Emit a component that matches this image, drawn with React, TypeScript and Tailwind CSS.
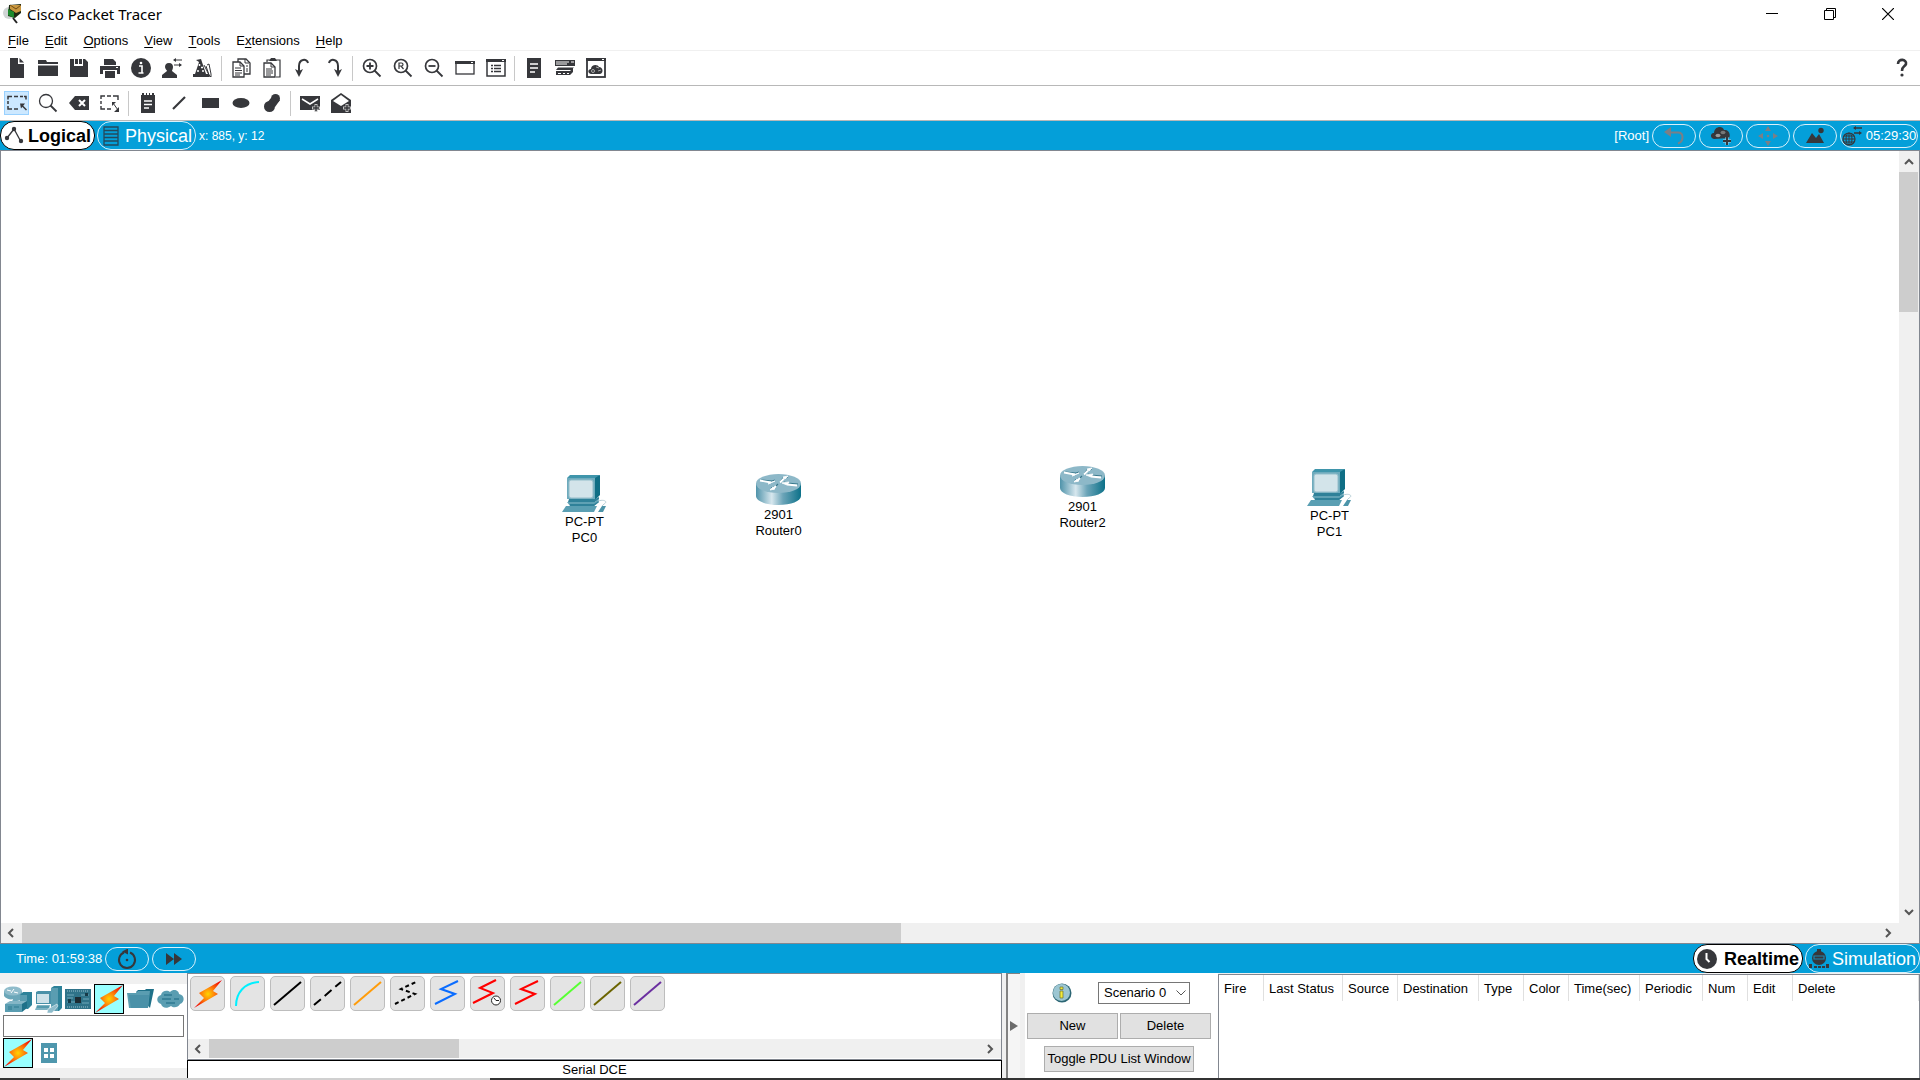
import type { ReactNode } from "react";
import clsx from "clsx";

const INK = "#36373b";

type IconProps = { children: ReactNode; size?: number };

// 20x20 drawing grid shared by the toolbar icons
const Icon = ({ children, size = 20 }: IconProps) => (
  <svg width={size} height={size} viewBox="0 0 20 20" fill="none" aria-hidden="true" className="shrink-0">
    {children}
  </svg>
);

const NewIcon = () => (
  <Icon>
    <path d="M3 0h8v6h6v14H3z" fill={INK} />
    <path d="M12.500 0L17 4.500H12.500z" fill={INK} />
  </Icon>
);

const OpenIcon = () => (
  <Icon>
    <path d="M0 2h8l1 2h11v2H0zM0 7.500h20V18H0z" fill={INK} />
  </Icon>
);

const SaveIcon = () => (
  <Icon>
    <path d="M1 1h4v7h9V1h2l3 3v15H1z" fill={INK} />
    <path d="M10 1h3v5h-3zM6 1h3v5H6z" fill={INK} />
  </Icon>
);

const PrintIcon = () => (
  <Icon>
    <path d="M4 1h9l3 3v3H4zM0 8h20v8h-3v-4H3v4H0zM5 13h10v7H5z" fill={INK} />
    <path d="M16 9.500h2" stroke="#fff" />
  </Icon>
);

const InfoIcon = () => (
  <Icon>
    <circle cx="10" cy="10" r="10" fill={INK} />
    <path d="M8 8h3v7M7.500 15h5" stroke="#fff" strokeWidth="1.600" />
    <circle cx="10" cy="5" r="1.300" fill="#fff" />
  </Icon>
);

const UserIcon = () => (
  <Icon>
    <path d="M7 5c3 0 4 2 4 4s-1 3-1 4l5 4v3H0v-3l5-4c0-1-2-2-2-4s1-4 4-4z" fill={INK} />
    <path d="M12 2h8M12 7h7" stroke={INK} strokeWidth="1.200" />
    <path d="M14 0v4l-3-2zM17 5v4l3-2z" fill={INK} />
  </Icon>
);

const WizardIcon = () => (
  <Icon>
    <path d="M3 2l5-1 5 15h3v3H0v-3h2l4-12z" fill={INK} />
    <path d="M6.500 6v2M8 9.500h2M5 12v2M9 13h2" stroke="#fff" strokeWidth="1.500" />
    <path d="M11 7l6 12M16 6l2 10v3l-2-2-3-9M16 6l-2 1" stroke={INK} />
  </Icon>
);

const CopyIcon = () => (
  <Icon>
    <path d="M7 5V1h8l4 4v11h-6" stroke={INK} strokeWidth="1.300" />
    <path d="M2 4h7l4 4v11H2z" fill="#fff" stroke={INK} strokeWidth="1.300" />
    <path d="M9 4v4h4M4 10h6M4 12.500h7M4 15h7M4 17h5M14 1v4h4M15 8h2M15 11h2M15 13h2" stroke={INK} />
  </Icon>
);

const PasteIcon = () => (
  <Icon>
    <path d="M5 4V2h13v17h-4" stroke={INK} strokeWidth="1.200" />
    <path d="M7 3l2-3h4l2 3z" fill={INK} />
    <path d="M2 5h7l4 4v10H2z" fill="#fff" stroke={INK} strokeWidth="1.300" />
    <path d="M9 5v4h4M4 11h6M4 13h7M4 15h7M4 17h5" stroke={INK} />
  </Icon>
);

const UndoIcon = () => (
  <Icon>
    <path d="M15 5c-1-5-9-4-9 3v5" stroke={INK} strokeWidth="2" />
    <path d="M2 11l4 2 4-2-4 8z" fill={INK} />
  </Icon>
);

const RedoIcon = () => (
  <Icon>
    <path d="M5 5c1-5 9-4 9 3v5" stroke={INK} strokeWidth="2" />
    <path d="M10 11l4 2 4-2-4 8z" fill={INK} />
  </Icon>
);

const ZoomGlyph = ({ kind }: { kind: "in" | "reset" | "out" | "plain" }) => (
  <Icon>
    <circle cx="8" cy="8" r="6.500" stroke={INK} strokeWidth={kind === "plain" ? 1.3 : 1.7} />
    <path d="M12.500 12.500l6 6" stroke={INK} strokeWidth="1.800" />
    {kind === "in" && <path d="M4.500 8h7M8 4.500v7" stroke={INK} strokeWidth="1.800" />}
    {kind === "out" && <path d="M4.500 8h7" stroke={INK} strokeWidth="1.800" />}
    {kind === "reset" && <path d="M6 11v-6h2.500c2 0 2 3 0 3H6M8 8l2.500 3" stroke={INK} strokeWidth="1.200" />}
  </Icon>
);

const WindowIcon = () => (
  <Icon>
    <rect x="1" y="4" width="18" height="12" stroke={INK} strokeWidth="1.300" />
    <path d="M0 3h20v3H0z" fill={INK} />
    <path d="M16 4.500h2" stroke="#fff" />
  </Icon>
);

const ListWindowIcon = () => (
  <Icon>
    <rect x="1" y="2" width="18" height="16" stroke={INK} strokeWidth="1.500" />
    <path d="M0 1h20v3H0z" fill={INK} />
    <path d="M16 2.500h2" stroke="#fff" />
    <path d="M5 7.500h2M8 7.500h7M5 10.500h2M8 10.500h7M5 13.500h2M8 13.500h7" stroke={INK} strokeWidth="1.300" />
  </Icon>
);

const DocIcon = () => (
  <Icon>
    <path d="M3 0h14v20H3z" fill={INK} />
    <path d="M6 6h8M6 10h8M6 14h5" stroke="#fff" strokeWidth="1.500" />
  </Icon>
);

const StackIcon = () => (
  <Icon>
    <path d="M0 2h20v6H0z" fill={INK} />
    <path d="M1 4h13M1 6h11M16 4h3" stroke="#fff" />
    <path d="M3 9.500h16l-3 2.500H1zM1 13h14l3-3v4l-3 3H1z" fill={INK} />
    <path d="M3 15.500h3M8 15.500h2M12 15.500h2" stroke="#fff" />
  </Icon>
);

const CloudWindowIcon = () => (
  <Icon>
    <rect x="1" y="1" width="18" height="18" stroke={INK} strokeWidth="1.800" />
    <path d="M0 0h20v3H0z" fill={INK} />
    <path d="M16 1.500h2" stroke="#fff" />
    <path d="M5 16c-4-1-3-5 0-5 0-5 7-5 8-2 4 0 5 6 1 7z" fill={INK} />
    <circle cx="7" cy="13" r="1.500" stroke="#aaa" />
    <path d="M10 9l3 1M12 13l3-1" stroke="#aaa" />
  </Icon>
);

const SelectIcon = () => (
  <Icon>
    <path d="M1 6.500V3.500h4M7 3.500h4M13 3.500h3M17 3.500h2v3M1 8v3M1 13v3h4M7 16h4" stroke={INK} strokeWidth="1.500" />
    <path d="M19.500 17l-5-5" stroke={INK} strokeWidth="1.500" />
    <path d="M13 10.500h5l-4 5z" fill={INK} />
  </Icon>
);

const EraseIcon = () => (
  <Icon>
    <path d="M0 10l6-7h14v14H6z" fill={INK} />
    <path d="M10 7l6 6M16 7l-6 6" stroke="#fff" strokeWidth="2" />
  </Icon>
);

const ResizeIcon = () => (
  <Icon>
    <path d="M1 6V3h4M7 3h4M13 3h5v4M1 8v3M1 13v3h4M7 16h4" stroke={INK} strokeWidth="1.400" />
    <path d="M13 10l5 7" stroke={INK} />
    <path d="M12 13V9h4zM19 14v5h-5z" fill={INK} />
  </Icon>
);

const NoteIcon = () => (
  <Icon>
    <path d="M3 2h14v18H3zM4 0h2v4H4zM8 0h1v4H8zM11 0h1v4h-1zM14 0h2v4h-2z" fill={INK} />
    <path d="M6 8h8M6 11.500h8M6 15h5" stroke="#fff" strokeWidth="1.500" />
  </Icon>
);

const LineIcon = () => (
  <Icon>
    <path d="M4 16L16 4" stroke={INK} strokeWidth="2.200" />
  </Icon>
);

const RectIcon = () => (
  <Icon>
    <path d="M2 5h17v10H2z" fill={INK} />
  </Icon>
);

const EllipseIcon = () => (
  <Icon>
    <ellipse cx="10" cy="10" rx="8.500" ry="5" fill={INK} />
  </Icon>
);

const FreeformIcon = () => (
  <Icon>
    <circle cx="13.500" cy="5.500" r="4.500" fill={INK} />
    <circle cx="7.500" cy="13.500" r="5.500" fill={INK} />
    <path d="M9 5l9 2-5 7-8-4z" fill={INK} />
  </Icon>
);

const MailPlusIcon = () => (
  <Icon>
    <path d="M0 3h20v14H0z" fill={INK} />
    <path d="M2 6l8 5 8-5" stroke="#fff" strokeWidth="1.500" />
    <path d="M16 11v8M12 15h8" stroke="#c4c4c4" strokeWidth="3" />
    <path d="M16 12v6M13 15h6" stroke={INK} strokeWidth="1.500" />
  </Icon>
);

const MailOpenIcon = () => (
  <Icon>
    <path d="M0 7l10-7 10 7v13H0z" fill={INK} />
    <path d="M2 8l8-6 8 6-8 5z" fill="#fff" />
    <path d="M16 11v8M12 15h8" stroke="#c4c4c4" strokeWidth="3" />
    <path d="M16 12v6M13 15h6" stroke={INK} strokeWidth="1.500" />
  </Icon>
);

type Tool = { name: string; icon: ReactNode; active?: boolean };

const mainTools: Tool[][] = [
  [
    { name: "New", icon: <NewIcon /> },
    { name: "Open", icon: <OpenIcon /> },
    { name: "Save", icon: <SaveIcon /> },
    { name: "Print", icon: <PrintIcon /> },
    { name: "Network Information", icon: <InfoIcon /> },
    { name: "User Profile", icon: <UserIcon /> },
    { name: "Activity Wizard", icon: <WizardIcon /> },
  ],
  [
    { name: "Copy", icon: <CopyIcon /> },
    { name: "Paste", icon: <PasteIcon /> },
    { name: "Undo", icon: <UndoIcon /> },
    { name: "Redo", icon: <RedoIcon /> },
  ],
  [
    { name: "Zoom In", icon: <ZoomGlyph kind="in" /> },
    { name: "Zoom Reset", icon: <ZoomGlyph kind="reset" /> },
    { name: "Zoom Out", icon: <ZoomGlyph kind="out" /> },
    { name: "Drawing Palette", icon: <WindowIcon /> },
    { name: "Command Log", icon: <ListWindowIcon /> },
  ],
  [
    { name: "Custom Devices", icon: <DocIcon /> },
    { name: "View Devices", icon: <StackIcon /> },
    { name: "Cluster View", icon: <CloudWindowIcon /> },
  ],
];

const editTools: Tool[][] = [
  [
    { name: "Select", icon: <SelectIcon />, active: true },
    { name: "Inspect", icon: <ZoomGlyph kind="plain" /> },
    { name: "Delete Object", icon: <EraseIcon /> },
    { name: "Resize", icon: <ResizeIcon /> },
  ],
  [
    { name: "Place Note", icon: <NoteIcon /> },
    { name: "Draw Line", icon: <LineIcon /> },
    { name: "Draw Rectangle", icon: <RectIcon /> },
    { name: "Draw Ellipse", icon: <EllipseIcon /> },
    { name: "Draw Freeform", icon: <FreeformIcon /> },
  ],
  [
    { name: "Add Simple PDU", icon: <MailPlusIcon /> },
    { name: "Add Complex PDU", icon: <MailOpenIcon /> },
  ],
];

const ToolGroups = ({ groups }: { groups: Tool[][] }) => (
  <div className="flex items-center pl-px">
    {groups.map((group, i) => (
      <div key={i} className="flex items-center">
        {i > 0 && <div className="mx-[3px] h-[25px] w-px bg-[#c8c8c8]" />}
        {group.map((tool) => (
          <div key={tool.name} className="flex w-[31px] justify-center">
            <button
              aria-label={tool.name}
              className={clsx(
                "flex h-6 w-[25px] items-center justify-center border",
                tool.active ? "border-[#99d1ff] bg-[#cce8ff]" : "border-transparent"
              )}
            >
              {tool.icon}
            </button>
          </div>
        ))}
      </div>
    ))}
  </div>
);

const TitleBar = () => (
  <header className="flex h-7 items-center justify-between px-[3px]">
    <div className="flex items-center gap-[5px]">
      <svg width="19" height="20" viewBox="0 0 19 20" aria-hidden="true">
        <circle cx="6" cy="9" r="6" fill="#cfd4d4" />
        <path d="M6 1l12-1v9l-6 5-7-2z" fill="#1d2a12" />
        <path d="M7 1h11v6l-5 2-6-4z" fill="#c9973f" />
        <path d="M7 1l6 4 5-4" stroke="#6d4a14" fill="none" />
        <path d="M5 5l6 3v6l-6-3z" fill="#1c8a2c" />
        <path d="M10 14l4 5" stroke="#222" strokeWidth="2" />
      </svg>
      <h1 className="font-['Noto_Sans',sans-serif] text-[15px] leading-5">Cisco Packet Tracer</h1>
    </div>
    <div className="flex">
      <button aria-label="Minimize" className="flex h-7 w-[58px] items-center justify-center">
        <svg width="12" height="12"><path d="M0 5.500h12" stroke="#000" /></svg>
      </button>
      <button aria-label="Restore" className="flex h-7 w-[58px] items-center justify-center">
        <svg width="12" height="12" fill="none" stroke="#000">
          <path d="M.5 2.500h9v9h-9zM2.500 2.500v-2h9v9h-2" />
        </svg>
      </button>
      <button aria-label="Close" className="flex h-7 w-[58px] items-center justify-center">
        <svg width="12" height="12"><path d="M0 0l12 12M12 0L0 12" stroke="#000" strokeWidth="1.200" /></svg>
      </button>
    </div>
  </header>
);

// [before, access key, after]
const menus = [
  ["", "F", "ile"],
  ["", "E", "dit"],
  ["", "O", "ptions"],
  ["", "V", "iew"],
  ["", "T", "ools"],
  ["E", "x", "tensions"],
  ["", "H", "elp"],
];

const MenuBar = () => (
  <nav className="flex h-[23px] gap-4 border-b border-[#f0f0f0] pl-2 pt-1">
    {menus.map(([before, key, after]) => (
      <button key={key + after} className="flex h-[18px] items-center leading-[18px]">
        {before}
        <span className="underline underline-offset-2">{key}</span>
        {after}
      </button>
    ))}
  </nav>
);

const Pill = ({ label, children, wide }: { label: string; children: ReactNode; wide?: boolean }) => (
  <button
    aria-label={label}
    className={clsx(
      "flex h-6 items-center justify-center rounded-full border border-[#d9f1fb]",
      wide ? "w-[78px] gap-1 text-white" : "w-11"
    )}
  >
    {children}
  </button>
);

const ModeTab = ({ active, icon, children, className }: { active?: boolean; icon: ReactNode; children: ReactNode; className: string }) => (
  <button
    className={clsx(
      "flex h-[29px] items-center justify-between rounded-[14px] border pl-[3px] pr-[3px] text-[18px] leading-6",
      active ? "border-black bg-white font-bold text-black" : "border-[#d9f1fb] text-white",
      className
    )}
  >
    {icon}
    {children}
  </button>
);

const WorkspaceBar = () => (
  <div className="flex h-[29px] items-center justify-between bg-[#049fd9] text-white">
    <div className="flex items-center gap-[2px]">
      <ModeTab
        active
        className="w-[95px]"
        icon={
          <Icon>
            <path d="M3 12L10 3l6 11" stroke={INK} strokeWidth="1.300" />
            <circle cx="3" cy="12" r="2.200" fill={INK} />
            <circle cx="10" cy="3" r="2.200" fill={INK} />
            <circle cx="17" cy="15" r="2.200" fill={INK} />
          </Icon>
        }
      >
        Logical
      </ModeTab>
      <ModeTab
        className="w-[99px]"
        icon={
          <Icon>
            <path d="M3 1h14v18H3zM3 4.500h14M3 8h14M3 11.500h14M3 15h14" stroke="#24495c" strokeWidth="1.300" />
          </Icon>
        }
      >
        Physical
      </ModeTab>
      <span className="pl-px text-[12px] leading-4">x: 885, y: 12</span>
    </div>
    <div className="flex items-center gap-[3px] pr-[2px]">
      <span className="leading-4">[Root]</span>
      <Pill label="Back">
        <Icon>
          <path d="M6 6.500h8c6 0 6 9 0 11" stroke="#7b7f86" strokeWidth="2" />
          <path d="M0 6l7-5v10z" fill="#7b7f86" />
        </Icon>
      </Pill>
      <Pill label="New Cluster">
        <Icon>
          <path d="M3 13c-5-1-3-7 0-6 0-7 9-8 10-3 5-1 7 5 5 8z" fill={INK} />
          <ellipse cx="7" cy="9.500" rx="2.500" ry="1.700" fill="#9a9a9a" />
          <ellipse cx="12" cy="6.500" rx="2.500" ry="1.700" fill="#777" />
          <path d="M16 11v8M12 15h8" stroke="#a9cfe0" strokeWidth="3" />
          <path d="M16 11v8M12 15h8" stroke={INK} strokeWidth="2" />
        </Icon>
      </Pill>
      <Pill label="Move Object">
        <Icon>
          <path d="M10 0l3 5H7zM10 20l3-5H7zM0 10l5-3v6zM20 10l-5-3v6z" fill="#7b7f86" />
          <circle cx="10" cy="10" r="1.300" fill="#7b7f86" />
        </Icon>
      </Pill>
      <Pill label="Set Background">
        <Icon>
          <path d="M1 17l6-10 4 5 3-4 5 9z" fill={INK} />
          <circle cx="16" cy="4.500" r="2.700" fill={INK} />
        </Icon>
      </Pill>
      <Pill label="Environment" wide>
        <Icon>
          <circle cx="7" cy="13" r="6" stroke={INK} strokeWidth="1.200" />
          <ellipse cx="7" cy="13" rx="3" ry="6" stroke={INK} />
          <path d="M7 7v12M1 13h12M2 10h10M2 16h10" stroke={INK} />
          <path d="M12 2h8M12 7h6" stroke={INK} strokeWidth="1.300" />
          <path d="M14 0v4l-3-2zM17 5v4l3-2z" fill={INK} />
        </Icon>
        05:29:30
      </Pill>
    </div>
  </div>
);

const Chevron = ({ dir }: { dir: "up" | "down" | "left" | "right" }) => (
  <svg width="12" height="12" viewBox="0 0 12 12" fill="none" stroke="#555" strokeWidth="2" aria-hidden="true">
    {dir === "up" && <path d="M2 8l4-4 4 4" />}
    {dir === "down" && <path d="M2 4l4 4 4-4" />}
    {dir === "left" && <path d="M8 2L4 6l4 4" />}
    {dir === "right" && <path d="M4 2l4 4-4 4" />}
  </svg>
);

const HScroll = ({ thumb, className }: { thumb: string; className?: string }) => (
  <div className={clsx("flex bg-[#f0f0f0]", className)}>
    <button aria-label="Scroll left" className="flex w-[21px] items-center justify-center pr-[2px]">
      <Chevron dir="left" />
    </button>
    <div className="flex flex-1">
      <div className={clsx("bg-[#cdcdcd]", thumb)} />
    </div>
    <button aria-label="Scroll right" className="flex w-[21px] items-center justify-center pr-[2px]">
      <Chevron dir="right" />
    </button>
  </div>
);

const PcDrawing = () => (
  <svg width="45" height="37" viewBox="0 0 45 37" aria-hidden="true">
    <path d="M5 3l3-3h30l-3 3z" fill="#3f95ab" />
    <path d="M33 3l5-3v20l-5 5z" fill="#0f6e85" />
    <path d="M5 3h28v21H5z" fill="#6eabbd" />
    <rect x="7" y="5" width="24" height="18" rx="2" fill="#d3e4ea" stroke="#94bdca" />
    <path d="M7 24h26l4-2v2l-4 3H6z" fill="#2f8199" />
    <path d="M5 27h28l4-3v3l-5 4H8z" fill="#5fa1b4" />
    <path d="M8 29h24l5-3v1l-5 4H8z" fill="#2f8199" />
    <path d="M4 31h31l-3 6H0z" fill="#5a9fb3" />
    <path d="M36 26c7-2 10 1 6 3l-2 2" stroke="#b7cfd7" fill="none" />
    <path d="M40 31h4l-3 6h-5z" fill="#4c94a9" />
  </svg>
);

const RouterDrawing = () => (
  <svg width="45" height="31" viewBox="0 0 45 31" aria-hidden="true">
    <defs>
      <linearGradient id="routerSide">
        <stop offset="0" stopColor="#4f93aa" />
        <stop offset="0.350" stopColor="#d7e7ee" />
        <stop offset="0.600" stopColor="#6ba4b8" />
        <stop offset="1" stopColor="#0c7189" />
      </linearGradient>
    </defs>
    <path d="M0 9v13c0 5 10 9 22.500 9S45 27 45 22V9z" fill="url(#routerSide)" />
    <ellipse cx="22.500" cy="9.500" rx="22.500" ry="9.500" fill="#8db8c8" />
    <g fill="none" stroke="#39798d" strokeWidth="1.200">
      <path d="M5 6l11 1 3-1M24 8l3-4 5-1M42 10l-11-1-3-1M15 14l4-1 3-3" />
    </g>
    <g fill="none" stroke="#fff" strokeWidth="1.800">
      <path d="M4 6.500l11 2M41 11.500l-10-1M24 8.500l4-4M20 12l-3 3" />
    </g>
    <path d="M19 7l-7 3 3-1.500zM26 9l7-1-2 3zM32 2l-5 1 2 2zM14 16l5-1-2-2z" fill="#fff" stroke="#fff" strokeWidth=".8" />
  </svg>
);

type DeviceProps = { kind: "pc" | "router"; model: string; name: string; spot: string };

const devices: DeviceProps[] = [
  { kind: "pc", model: "PC-PT", name: "PC0", spot: "left-[561px] top-[324px]" },
  { kind: "router", model: "2901", name: "Router0", spot: "left-[755px] top-[323px]" },
  { kind: "router", model: "2901", name: "Router2", spot: "left-[1059px] top-[315px]" },
  { kind: "pc", model: "PC-PT", name: "PC1", spot: "left-[1306px] top-[318px]" },
];

const Device = ({ kind, model, name, spot }: DeviceProps) => (
  <div className={clsx("absolute flex w-[45px] flex-col items-center leading-4", spot)}>
    {kind === "pc" ? <PcDrawing /> : <RouterDrawing />}
    <span className="pt-[2px]">{model}</span>
    <span>{name}</span>
  </div>
);

const Workspace = () => (
  <main className="flex flex-1 flex-col border border-[#828790]">
    <div className="flex flex-1">
      <div className="relative flex-1 overflow-hidden bg-white">
        {devices.map((device) => (
          <Device key={device.name} {...device} />
        ))}
      </div>
      <div className="flex w-5 flex-col bg-[#f0f0f0] pr-px">
        <button aria-label="Scroll up" className="flex h-[21px] items-center justify-center">
          <Chevron dir="up" />
        </button>
        <div className="flex flex-1 flex-col">
          <div className="h-[140px] bg-[#cdcdcd]" />
        </div>
        <button aria-label="Scroll down" className="flex h-[21px] items-center justify-center pb-[2px]">
          <Chevron dir="down" />
        </button>
      </div>
    </div>
    <HScroll className="h-5 pr-5" thumb="w-[879px]" />
  </main>
);

const TimeBar = () => (
  <div className="flex h-[29px] items-center justify-between bg-[#049fd9] text-white">
    <div className="flex items-center gap-[3px] pl-4">
      <span className="leading-4">Time: 01:59:38</span>
      <Pill label="Power Cycle Devices">
        <Icon>
          <path d="M7 3.500a8 8 0 1 0 6 0" stroke={INK} strokeWidth="2" />
          <path d="M5 2.500l6-3v6z" fill={INK} />
          <circle cx="10" cy="11" r="1.300" fill={INK} />
        </Icon>
      </Pill>
      <Pill label="Fast Forward Time">
        <Icon>
          <path d="M2 4l8 6-8 6zM10 4l8 6-8 6z" fill={INK} />
        </Icon>
      </Pill>
    </div>
    <div className="flex items-center gap-[2px]">
      <ModeTab
        active
        className="w-[110px]"
        icon={
          <Icon>
            <circle cx="10" cy="10" r="10" fill={INK} />
            <path d="M9.500 4v6l3 3" stroke="#fff" strokeWidth="2" />
          </Icon>
        }
      >
        Realtime
      </ModeTab>
      <ModeTab
        className="w-[115px]"
        icon={
          <Icon>
            <path d="M8 0h4v3H8z" fill={INK} />
            <circle cx="10" cy="9" r="7" fill={INK} />
            <path d="M5 7h10v3H5z" stroke="#1c87b3" strokeWidth="1.200" />
            <path d="M0 15h3v4H0zM5 17h3v2H5zM9 17h3v2H9zM13 17h3v2h-3zM17 15h3v4h-3z" fill={INK} />
          </Icon>
        }
      >
        Simulation
      </ModeTab>
    </div>
  </div>
);

const Bolt = () => (
  <svg width="28" height="28" viewBox="1 1 28 28" aria-hidden="true">
    <defs>
      <radialGradient id="boltFill" cx="0.500" cy="0.500" r="0.600">
        <stop offset="0" stopColor="#ffd400" />
        <stop offset="0.350" stopColor="#ff8a0a" />
        <stop offset="1" stopColor="#f00000" />
      </radialGradient>
    </defs>
    <path d="M29 1L20 12l5 3L1 29l10-10-5-5z" fill="url(#boltFill)" />
  </svg>
);

const NetworkDevices = () => (
  <svg width="28" height="27" viewBox="0 0 28 27" aria-hidden="true">
    <path d="M0 5v5c2 3 7 4 9 3l-1 3 10-2V5z" fill="#6ba7b9" />
    <ellipse cx="9" cy="5" rx="9" ry="4.500" fill="#8fbccb" />
    <path d="M3 4l4 1M10 6l4 1M7 7l3-4" stroke="#fff" />
    <path d="M16 9l3-3h9v13l-4 4h-8z" fill="#2d8299" />
    <path d="M16 9h7v14h-7z" fill="#5a9db1" />
    <path d="M1 18l5-3h17l-5 3z" fill="#84b6c6" />
    <path d="M1 18h17v8H1z" fill="#5a9db1" />
    <path d="M18 18l5-3v7l-5 4z" fill="#1f7189" />
    <path d="M4 21h4M10 21h5M4 23h4" stroke="#2d7a90" />
  </svg>
);

const EndDevices = () => (
  <svg width="27" height="27" viewBox="0 0 27 27" aria-hidden="true">
    <path d="M16 2l3-2h8v22l-3 3h-8z" fill="#2d8299" />
    <path d="M16 2h7v23h-7z" fill="#5a9db1" />
    <path d="M1 6l2-1h13v13H1z" fill="#4a91a8" />
    <path d="M2 8h12v9H2z" fill="#cfe2e9" />
    <path d="M2 19h13l-1 5H0z" fill="#7fb3c2" />
    <path d="M2 21h12" stroke="#2d8299" />
    <path d="M13 23l9-5 1 2-6 7h-5z" fill="#8fbccb" stroke="#fff" strokeWidth=".5" />
  </svg>
);

const Components = () => (
  <svg width="26" height="20" viewBox="0 0 26 20" aria-hidden="true">
    <path d="M0 0h26v20H0z" fill="#2f7389" />
    <path d="M2 2h21M2 18h21" stroke="#9cc3cf" strokeDasharray="1 1" />
    <path d="M2 6h7M2 9h6M2 13h8M16 6h8M18 10h6M17 14h7" stroke="#6fa9ba" />
    <path d="M10 8h6v6h-6z" fill="#1d2c33" />
    <path d="M3 10h3v4H3zM20 4h3v3h-3z" fill="#173a48" />
  </svg>
);

const Miscellaneous = () => (
  <svg width="27" height="20" viewBox="0 0 27 20" aria-hidden="true">
    <path d="M9 3l2-2h7l1-1h8l-4 19z" fill="#1f7189" />
    <path d="M0 4h9l2-2h12l-2 17H2z" fill="#5a9db1" />
    <path d="M2 6h20l-1 13H4z" fill="#4a91a8" />
  </svg>
);

const Multiuser = () => (
  <svg width="27" height="20" viewBox="0 0 27 20" aria-hidden="true">
    <path d="M4 15c-5-1-5-8 0-9 1-5 7-5 9-3 4-4 9-1 9 2 6 1 6 8 1 10-2 4-7 4-9 2-4 3-9 2-10-2z" fill="#5a9db1" />
    <path d="M7 6h8M5 10h9M17 10h5M9 14h9" stroke="#2f7a91" strokeWidth="1.300" />
  </svg>
);

const categories = [
  { name: "Network Devices", icon: <NetworkDevices /> },
  { name: "End Devices", icon: <EndDevices /> },
  { name: "Components", icon: <Components /> },
  { name: "Connections", icon: <Bolt />, active: true },
  { name: "Miscellaneous", icon: <Miscellaneous /> },
  { name: "Multiuser Connection", icon: <Multiuser /> },
];

const selectedTile = "h-[30px] w-[30px] border border-black bg-[#99ffff]";

const CategoryPanel = () => (
  <div className="w-[187px] bg-[#f0f0f0] pb-[10px] pt-[11px]">
    <div className="h-[84px] bg-white pl-[3px]">
      <div className="flex h-[30px] items-center justify-between pl-px pr-[3px]">
        {categories.map(({ name, icon, active }) => (
          <button key={name} aria-label={name} className={clsx("flex items-center justify-center", active && selectedTile)}>
            {icon}
          </button>
        ))}
      </div>
      <input aria-label="Search devices" className="mt-px block h-[22px] w-[181px] border border-[#767676] bg-white px-1" />
      <div className="mt-px flex h-[30px] items-center gap-2">
        <button aria-label="Connections" className={clsx("flex items-center justify-center", selectedTile)}>
          <Bolt />
        </button>
        <button aria-label="Structured Cabling">
          <svg width="16" height="20" viewBox="0 0 16 20" aria-hidden="true">
            <path d="M0 0h16v20H0z" fill="#4f97ad" />
            <path d="M3 5h4v4H3zM9 5h4v4H9zM3 11h4v4H3zM9 11h4v4H9z" fill="#fff" />
          </svg>
        </button>
      </div>
    </div>
  </div>
);

const SLANT = "M4 29L31 6";
const ZIGZAG = "M5 28l20-10-14-5L28 5";

const cables = [
  { name: "Copper Straight-Through", color: "#000", path: SLANT },
  { name: "Copper Cross-Over", color: "#000", path: SLANT, dash: "9 5" },
  { name: "Fiber", color: "#ff9c0a", path: SLANT },
  { name: "Phone", color: "#000", path: ZIGZAG, dash: "4 3" },
  { name: "Coaxial", color: "#0a6cff", path: ZIGZAG },
  { name: "Serial DCE", color: "#ff0000", path: "M3 27l20-10-13-5L26 4", clock: true },
  { name: "Serial DTE", color: "#ff0000", path: ZIGZAG },
  { name: "Octal", color: "#58ff33", path: SLANT },
  { name: "IoT Custom Cable", color: "#6b6400", path: SLANT },
  { name: "USB", color: "#6b2fa0", path: SLANT },
];

const cableButton = "flex h-[35px] w-[35px] items-center justify-center rounded-[5px] border border-[#bdbdbd] bg-[#e4e4e4]";

const CablePanel = () => (
  <div className="flex w-[815px] flex-col">
    <div className="flex h-[87px] flex-col justify-between border border-[#828790] bg-white">
      <div className="flex gap-[5px] pl-[2px] pt-[2px]">
        <button aria-label="Automatically Choose Connection Type" className={cableButton}>
          <Bolt />
        </button>
        <button aria-label="Console" className={cableButton}>
          <svg width="33" height="33" viewBox="1 1 33 33" fill="none" aria-hidden="true">
            <path d="M6 30C6 17 14 7 29 6" stroke="#00f0ff" strokeWidth="2" />
          </svg>
        </button>
        {cables.map(({ name, color, path, dash, clock }) => (
          <button key={name} aria-label={name} className={cableButton}>
            <svg width="33" height="33" viewBox="1 1 33 33" fill="none" aria-hidden="true">
              <path d={path} stroke={color} strokeWidth="2" strokeDasharray={dash} />
              {clock && (
                <g stroke="#222">
                  <circle cx="26" cy="24.500" r="4.500" fill="#fff" />
                  <path d="M24 22l2 2.500h3" />
                </g>
              )}
            </svg>
          </button>
        ))}
      </div>
      <HScroll className="mb-px h-[19px]" thumb="w-[250px]" />
    </div>
    <div className="flex flex-1 items-center justify-center border border-b-0 border-black bg-white leading-4">
      Serial DCE
    </div>
  </div>
);

const ScenarioPanel = () => (
  <div className="flex w-[193px] flex-col bg-white pl-[2px] pt-[9px]">
    <div className="flex h-[22px] items-center pl-[25px]">
      <button aria-label="Scenario Description">
        <Icon>
          <circle cx="10" cy="10" r="9.500" fill="#2c6674" />
          <circle cx="9.500" cy="9.500" r="8.500" fill="#9cc6d2" />
          <path d="M8 8h3v7H8zM8 4h3v2.500H8z" fill="#f5ec3a" stroke="#6a7030" strokeWidth=".7" />
        </Icon>
      </button>
      <div className="relative ml-[26px] flex">
        <select aria-label="Scenario" className="h-[22px] w-[92px] appearance-none border border-[#767676] bg-white pl-[5px] leading-4">
          <option>Scenario 0</option>
        </select>
        <svg width="10" height="6" className="pointer-events-none absolute right-1 top-2" aria-hidden="true">
          <path d="M.5 .5L5 5l4.500-4.500" stroke="#555" fill="none" />
        </svg>
      </div>
    </div>
    <div className="mt-[9px] flex gap-[2px]">
      <button className="h-[26px] w-[91px] border border-[#adadad] bg-[#e1e1e1] leading-4">New</button>
      <button className="h-[26px] w-[91px] border border-[#adadad] bg-[#e1e1e1] leading-4">Delete</button>
    </div>
    <button className="ml-[17px] mt-[7px] h-[26px] w-[150px] whitespace-nowrap border border-[#adadad] bg-[#e1e1e1] leading-4">
      Toggle PDU List Window
    </button>
  </div>
);

const columns = [
  { title: "Fire", width: "w-[45px]" },
  { title: "Last Status", width: "w-[79px]" },
  { title: "Source", width: "w-[55px]" },
  { title: "Destination", width: "w-[81px]" },
  { title: "Type", width: "w-[45px]" },
  { title: "Color", width: "w-[45px]" },
  { title: "Time(sec)", width: "w-[71px]" },
  { title: "Periodic", width: "w-[63px]" },
  { title: "Num", width: "w-[45px]" },
  { title: "Edit", width: "w-[45px]" },
  { title: "Delete", width: "" },
];

const PduList = () => (
  <div className="mt-px flex-1 border border-b-0 border-[#828790] bg-white">
    <table className="w-full table-fixed border-separate border-spacing-0">
      <thead>
        <tr>
          {columns.map(({ title, width }) => (
            <th
              key={title}
              className={clsx("h-[26px] whitespace-nowrap border-r border-[#e0e0e0] p-0 pl-[5px] pt-px text-left font-normal leading-4", width)}
            >
              {title}
            </th>
          ))}
        </tr>
      </thead>
    </table>
  </div>
);

const BottomPanel = () => (
  <footer className="flex h-[105px] bg-[#f0f0f0]">
    <CategoryPanel />
    <CablePanel />
    <button
      aria-label="Collapse panel"
      className="ml-1 mr-[5px] flex w-[14px] items-center justify-center border-l-2 border-t border-[#828282] bg-[#f5f5f5]"
    >
      <svg width="8" height="10" aria-hidden="true">
        <path d="M0 0l8 5-8 5z" fill="#6b6b6b" />
      </svg>
    </button>
    <ScenarioPanel />
    <PduList />
  </footer>
);

export default function App() {
  return (
    <div className="flex min-h-screen flex-col bg-white font-['Liberation_Sans',Arial,sans-serif] text-[13px] text-black">
      <TitleBar />
      <MenuBar />
      <div className="flex h-[35px] items-center justify-between border-b border-[#b8b8b8] pr-[8px]">
        <ToolGroups groups={mainTools} />
        <button aria-label="Help">
          <Icon>
            <path d="M6 6c0-6 9-5 8 0-1 3-4 2-4 7" stroke={INK} strokeWidth="2.600" />
            <circle cx="10" cy="17" r="1.600" fill={INK} />
          </Icon>
        </button>
      </div>
      <div className="flex h-[35px] items-center border-b border-[#b8b8b8]">
        <ToolGroups groups={editTools} />
      </div>
      <WorkspaceBar />
      <Workspace />
      <TimeBar />
      <BottomPanel />
      <div className="flex h-[2px] bg-[#333]">
        <div className="ml-[60px] w-[430px] bg-[#d0d0d0]" />
      </div>
    </div>
  );
}
